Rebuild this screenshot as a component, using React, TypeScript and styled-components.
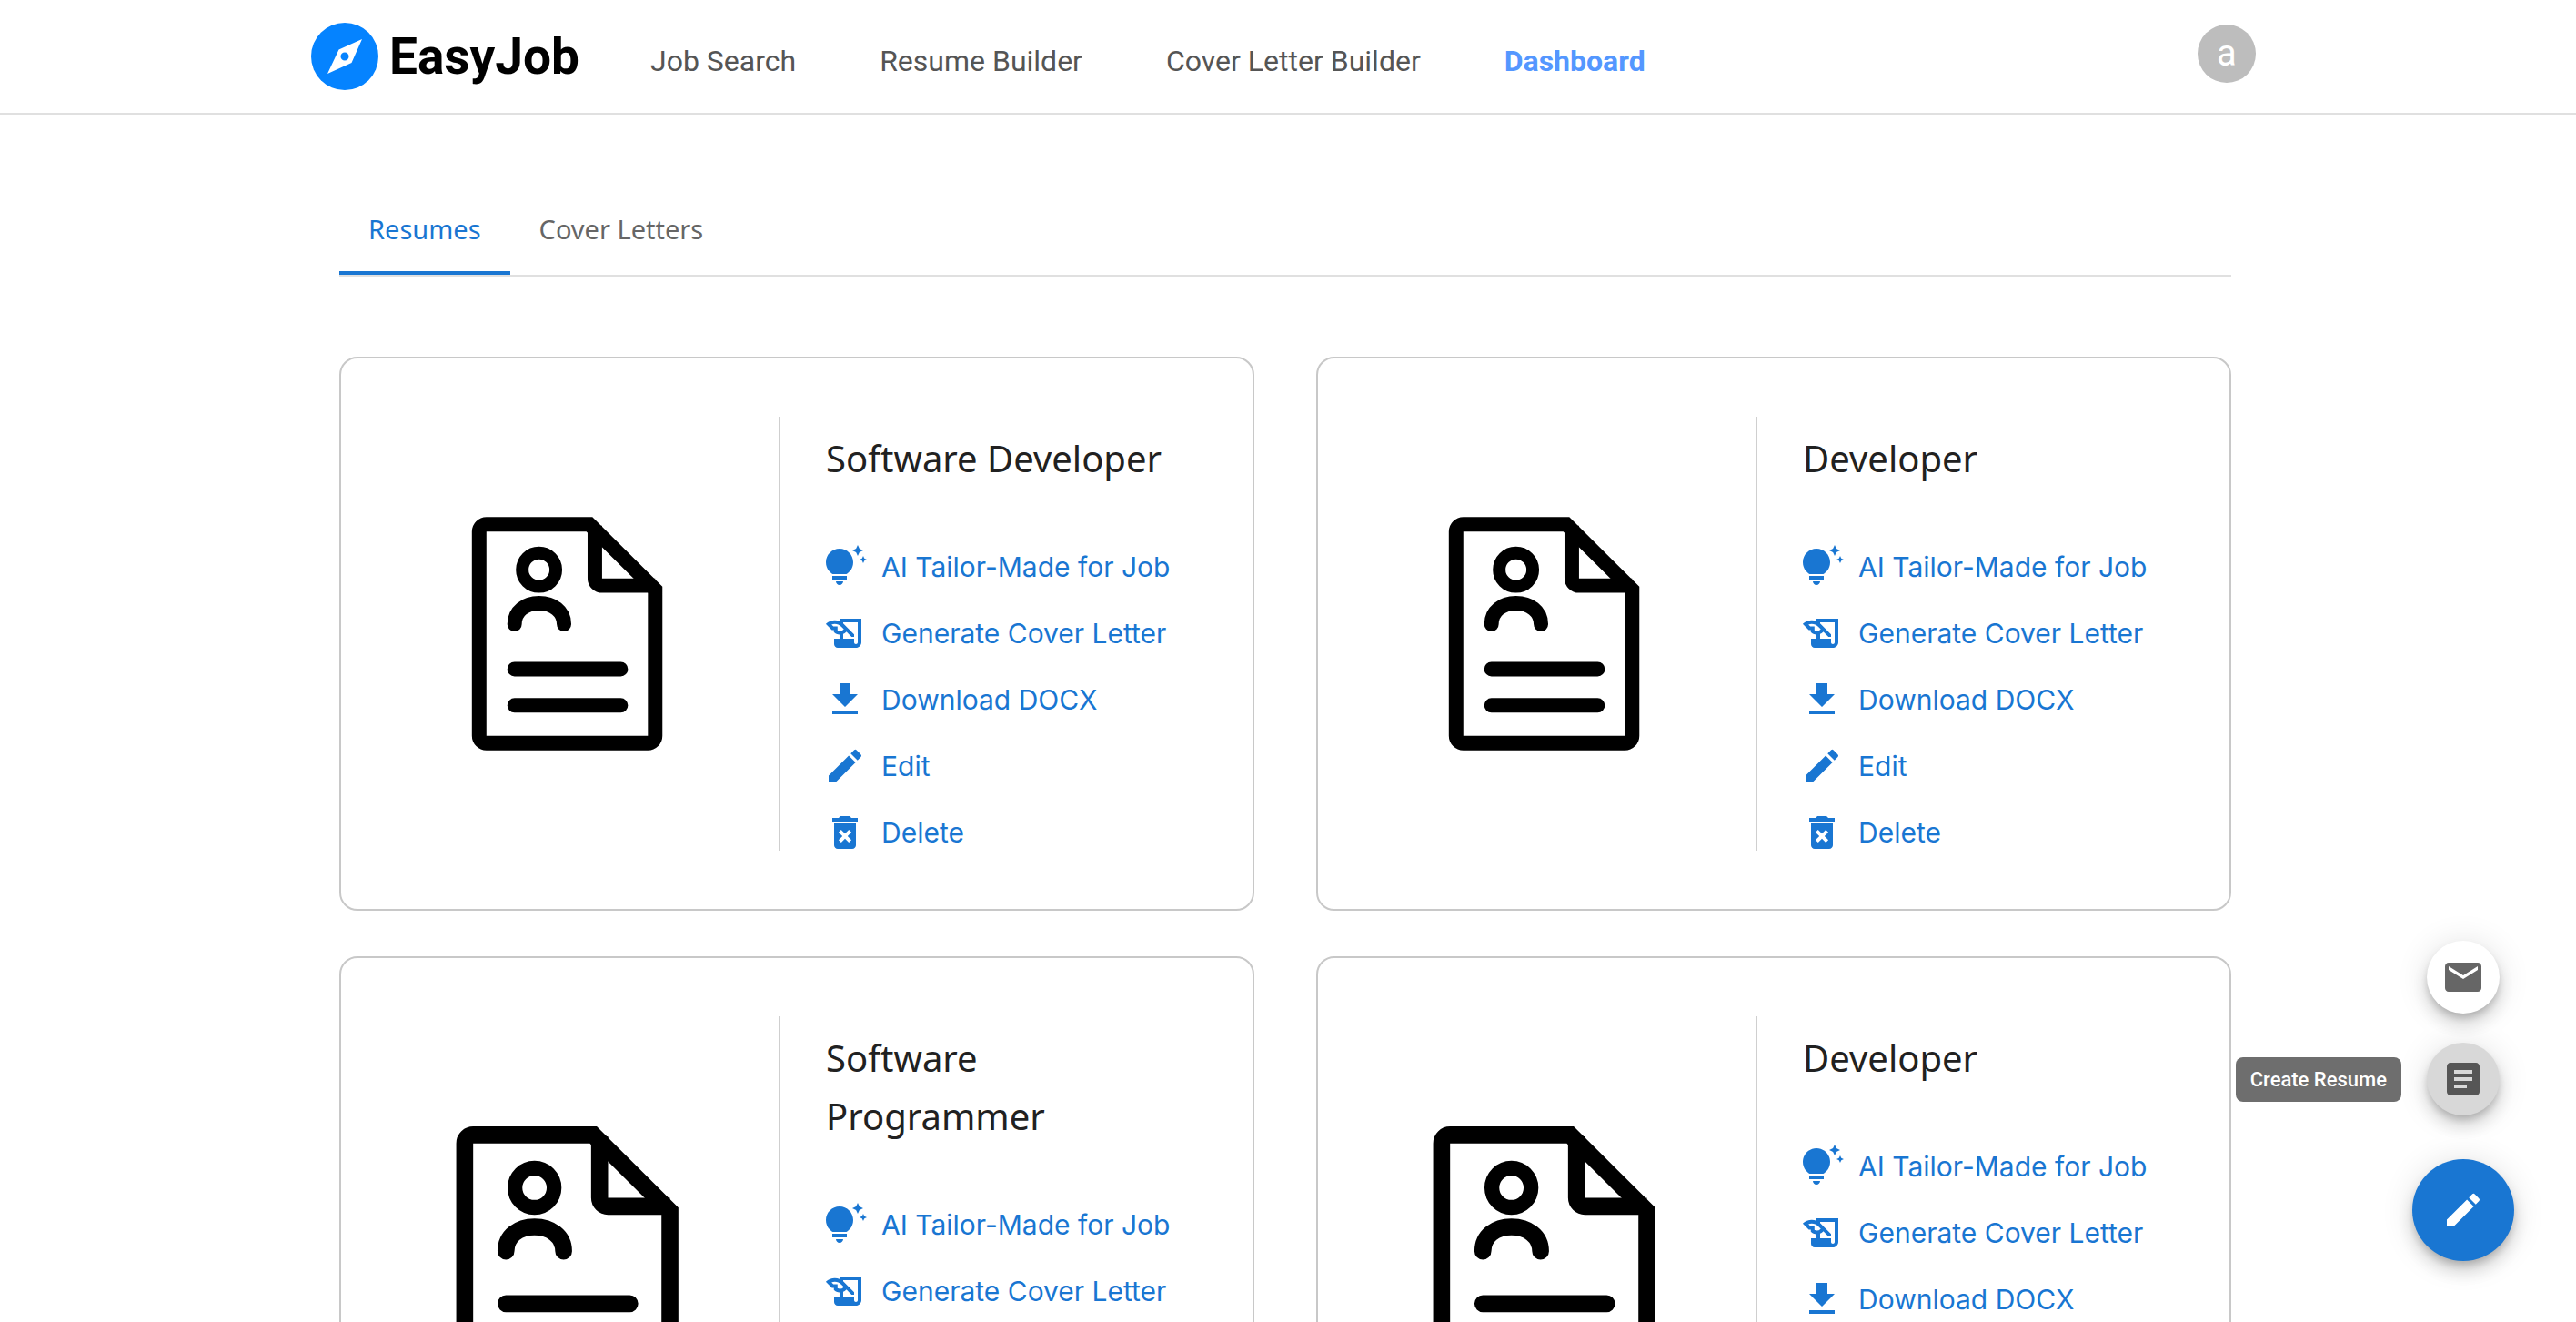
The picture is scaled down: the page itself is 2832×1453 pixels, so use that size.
import React, { useState } from "react";
import styled, { createGlobalStyle, css } from "styled-components";
import {
  MdArticle,
  MdDeleteForever,
  MdEdit,
  MdEmail,
  MdGetApp,
  MdHistoryEdu,
  MdTipsAndUpdates,
} from "react-icons/md";

const color = {
  primary: "#1976d2",
  navActive: "#5497ff",
  navText: "#555555",
  muted: "#666666",
  ink: "#212121",
  line: "#e0e0e0",
  cardLine: "#c8c8c8",
};

const font = {
  ui: `Roboto, "Liberation Sans", sans-serif`,
  display: `"Noto Sans", "Open Sans", sans-serif`,
  action: `Inter, "Open Sans", sans-serif`,
};

const GlobalStyle = createGlobalStyle`
  *, *::before, *::after { box-sizing: border-box; }
  body {
    margin: 0;
    background: #ffffff;
    color: ${color.ink};
    font-family: ${font.ui};
  }
  button { font: inherit; }
`;

const Header = styled.header`
  padding-right: 10px;
  border-bottom: 2px solid ${color.line};
`;

const HeaderInner = styled.div`
  display: flex;
  align-items: center;
  max-width: 2138px;
  height: 124px;
  margin: 0 auto;
`;

const Brand = styled.a`
  display: flex;
  align-items: center;
  gap: 12px;
  color: #000000;
  font-family: ${font.ui};
  font-size: 55px;
  font-weight: 700;
  line-height: 74px;
  text-decoration: none;

  svg {
    width: 74px;
    height: 74px;
  }
`;

const Nav = styled.nav`
  display: flex;
  gap: 92px;
  margin-left: 78px;
  padding-top: 10px;
`;

const NavLink = styled.a<{ $active?: boolean }>`
  color: ${(p) => (p.$active ? color.navActive : color.navText)};
  font-size: 32px;
  font-weight: ${(p) => (p.$active ? 700 : 400)};
  line-height: 48px;
  text-decoration: none;
`;

const Avatar = styled.button`
  display: grid;
  place-items: center;
  width: 64px;
  height: 64px;
  margin-left: auto;
  margin-bottom: 6px;
  padding: 0;
  border: 0;
  border-radius: 50%;
  background: #bdbdbd;
  color: #ffffff;
  font-size: 40px;
  line-height: 40px;
`;

const Page = styled.main`
  padding: 92px 6px 50px 0;
`;

const Container = styled.div`
  max-width: 2080px;
  margin: 0 auto;
`;

const TabList = styled.div`
  display: flex;
  border-bottom: 2px solid ${color.line};
`;

const Tab = styled.button<{ $selected: boolean }>`
  height: 84px;
  padding: 0 32px 12px;
  border: 0;
  border-bottom: 4px solid ${(p) => (p.$selected ? color.primary : "transparent")};
  background: none;
  color: ${(p) => (p.$selected ? color.primary : color.muted)};
  font-family: ${font.display};
  font-size: 29px;
  line-height: 36px;
`;

const CardGrid = styled.div`
  display: grid;
  grid-template-columns: 1fr 1fr;
  gap: 50px 68px;
  margin-top: 88px;

  @media (max-width: 1500px) {
    grid-template-columns: 1fr;
  }
`;

const Card = styled.article`
  display: flex;
  padding: 64px;
  border: 2px solid ${color.cardLine};
  border-radius: 20px;
`;

const Preview = styled.div`
  display: flex;
  flex: 0 0 42%;
  flex-direction: column;
  padding: 46px 0;

  svg {
    flex: 1 1 0;
    width: 100%;
    height: 0;
    min-height: 0;
  }
`;

const Divider = styled.div`
  flex: none;
  width: 2px;
  margin: 0 50px;
  background: #cfcfcf;
`;

const Details = styled.div`
  flex: 1;
  min-width: 0;
  padding-top: 14px;
`;

const Title = styled.h2`
  margin: 0 0 67px;
  font-family: ${font.display};
  font-size: 40px;
  font-weight: 400;
  line-height: 64px;
`;

const Actions = styled.div`
  display: flex;
  flex-direction: column;
  align-items: flex-start;
  gap: 33px;
`;

const ActionButton = styled.button`
  display: flex;
  align-items: center;
  gap: 16px;
  height: 40px;
  margin-left: -3px;
  padding: 0;
  border: 0;
  background: none;
  color: ${color.primary};
  font-family: ${font.action};
  font-size: 30px;
  font-weight: 400;
  line-height: 40px;
  white-space: nowrap;

  svg {
    flex: none;
    width: 48px;
    height: 48px;
  }
`;

const SpeedDial = styled.div`
  position: fixed;
  right: 68px;
  bottom: 67px;
  display: flex;
  flex-direction: column;
  align-items: center;
  gap: 48px;
`;

const DialActions = styled.div`
  display: flex;
  flex-direction: column;
  gap: 32px;
`;

const DialItem = styled.div`
  position: relative;
`;

const dialShadow = css`
  box-shadow: 0 6px 10px -2px rgba(0, 0, 0, 0.2), 0 12px 20px 0 rgba(0, 0, 0, 0.14),
    0 2px 36px 0 rgba(0, 0, 0, 0.12);
`;

const DialButton = styled.button<{ $size: number; $bg: string; $fg: string }>`
  display: grid;
  place-items: center;
  width: ${(p) => p.$size}px;
  height: ${(p) => p.$size}px;
  padding: 0;
  border: 0;
  border-radius: 50%;
  background: ${(p) => p.$bg};
  color: ${(p) => p.$fg};
  ${dialShadow}

  svg {
    width: 48px;
    height: 48px;
  }
`;

const Tooltip = styled.span`
  position: absolute;
  top: 16px;
  right: 108px;
  padding: 8px 16px;
  border-radius: 8px;
  background: #6e6e6e;
  color: #ffffff;
  font-size: 22px;
  font-weight: 500;
  line-height: 33px;
  white-space: nowrap;
`;

const CompassLogo = () => (
  <svg viewBox="0 0 74 74" aria-hidden="true">
    <circle cx="37" cy="37" r="37" fill="#0583ff" />
    <path
      fill="#fff"
      fillRule="evenodd"
      d="M56 18 44.5 44 18 56 30.500 29.500ZM37 32.500a4.500 4.500 0 1 0 0 9 4.500 4.500 0 0 0 0-9Z"
    />
  </svg>
);

const ResumeDrawing = () => (
  <svg viewBox="-1 0 300 386" role="img" aria-label="Resume document">
    <g fill="none" stroke="#000" strokeWidth="16">
      <path d="M174.500 72.500H61a8 8 0 0 0-8 8V305.500a8 8 0 0 0 8 8H239a8 8 0 0 0 8-8V144.500Z" />
      <path d="M180.500 74V132a8 8 0 0 0 8 8H247" />
      <circle cx="119" cy="122.500" r="18.500" strokeWidth="14" />
      <path
        strokeLinecap="round"
        d="M92 182.500C92 168 104 159.500 119 159.500S146.500 168 146.500 182.500M92 232H209M92 272H209"
      />
    </g>
  </svg>
);

const navItems = ["Job Search", "Resume Builder", "Cover Letter Builder", "Dashboard"];
const tabs = ["Resumes", "Cover Letters"];
const resumes = ["Software Developer", "Developer", "Software Programmer", "Developer"];
const actions = [
  { label: "AI Tailor-Made for Job", Icon: MdTipsAndUpdates },
  { label: "Generate Cover Letter", Icon: MdHistoryEdu },
  { label: "Download DOCX", Icon: MdGetApp },
  { label: "Edit", Icon: MdEdit },
  { label: "Delete", Icon: MdDeleteForever },
];

const ResumeCard = ({ title }: { title: string }) => (
  <Card>
    <Preview>
      <ResumeDrawing />
    </Preview>
    <Divider />
    <Details>
      <Title>{title}</Title>
      <Actions>
        {actions.map(({ label, Icon }) => (
          <ActionButton key={label} type="button">
            <Icon />
            {label}
          </ActionButton>
        ))}
      </Actions>
    </Details>
  </Card>
);

export default function App() {
  const [tab, setTab] = useState(tabs[0]);

  return (
    <>
      <GlobalStyle />
      <Header>
        <HeaderInner>
          <Brand href="#">
            <CompassLogo />
            EasyJob
          </Brand>
          <Nav>
            {navItems.map((item) => (
              <NavLink key={item} href="#" $active={item === "Dashboard"}>
                {item}
              </NavLink>
            ))}
          </Nav>
          <Avatar type="button">a</Avatar>
        </HeaderInner>
      </Header>
      <Page>
        <Container>
          <TabList role="tablist">
            {tabs.map((name) => (
              <Tab
                key={name}
                type="button"
                role="tab"
                aria-selected={name === tab}
                $selected={name === tab}
                onClick={() => setTab(name)}
              >
                {name}
              </Tab>
            ))}
          </TabList>
          <CardGrid>
            {resumes.map((title, i) => (
              <ResumeCard key={i} title={title} />
            ))}
          </CardGrid>
        </Container>
      </Page>
      <SpeedDial>
        <DialActions>
          <DialItem>
            <DialButton type="button" aria-label="Create Cover Letter" $size={80} $bg="#ffffff" $fg="#666666">
              <MdEmail />
            </DialButton>
          </DialItem>
          <DialItem>
            <Tooltip id="create-resume">Create Resume</Tooltip>
            <DialButton type="button" aria-labelledby="create-resume" $size={80} $bg="#d8d8d8" $fg="#565656">
              <MdArticle />
            </DialButton>
          </DialItem>
        </DialActions>
        <DialButton type="button" aria-label="Create" $size={112} $bg={color.primary} $fg="#ffffff">
          <MdEdit />
        </DialButton>
      </SpeedDial>
    </>
  );
}
